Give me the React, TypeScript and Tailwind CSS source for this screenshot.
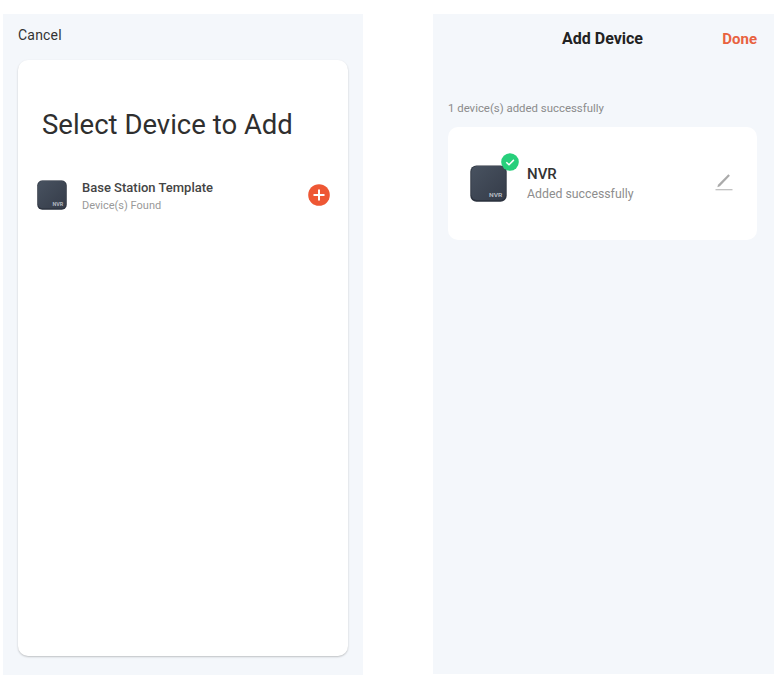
const DeviceIcon = ({ label, className }: { label: string; className: string }) => (
	<svg viewBox="0 0 36 36" className={className} aria-hidden="true">
		<defs>
			<linearGradient id="device" x1="0" y1="0" x2="1" y2="1">
				<stop offset="0" stopColor="#485260" />
				<stop offset="1" stopColor="#353c49" />
			</linearGradient>
		</defs>
		<rect x="0.3" y="0.5" width="35.4" height="35.3" rx="6" fill="#2c333f" />
		<rect x="1.2" y="1" width="33.6" height="33" rx="5.5" fill="url(#device)" />
		<text x="18.5" y="31" fontSize="5.6" fontWeight="700" fill="#b3b8c1" textLength="13" lengthAdjust="spacingAndGlyphs">
			{label}
		</text>
	</svg>
);

const AddIcon = () => (
	<svg viewBox="0 0 22 22" className="size-[22px]" aria-hidden="true">
		<circle cx="11" cy="11" r="10.8" fill="#ee5734" />
		<path d="M11 5.5v11M5.5 11h11" stroke="#fff" strokeWidth="2" fill="none" />
	</svg>
);

const CheckBadge = () => (
	<svg viewBox="0 0 18 18" className="absolute -right-3 -top-[12px] size-[18px]" aria-hidden="true">
		<circle cx="9" cy="9" r="8.8" fill="#27cf7b" />
		<path d="M5.3 9.2l2.7 2.6 4.9-4.9" stroke="#fff" strokeWidth="1.5" fill="none" />
	</svg>
);

const EditIcon = () => (
	<svg viewBox="0 0 18 18" className="h-[18px] w-[18px]" aria-hidden="true">
		<path d="M2.4 14.2l.6-2.5L13.4 1.2l1.5 1.5L4.9 13.3z" fill="#aaa" />
		<path d="M0.5 16.7h17" stroke="#bcbcbc" strokeWidth="1.2" />
	</svg>
);

const SelectDeviceScreen = () => (
	<section className="flex h-[661px] w-[360px] flex-col bg-[#f4f7fb] px-[15px] pt-[11px]">
		<button className="h-5 self-start text-[14px] leading-5 tracking-[0.2px] text-[#333]">Cancel</button>
		<div className="mt-[15px] h-[596px] w-[330px] rounded-[10px] bg-white px-6 pt-[49px] shadow-[0_1px_2px_rgba(0,0,0,0.22)]">
			<h1 className="h-8 whitespace-nowrap text-[27.5px] leading-8 text-[#2f2f2f]">Select Device to Add</h1>
			<div className="-ml-[5px] mt-8 flex h-[44px] items-center">
				<DeviceIcon label="NVR" className="size-[30px]" />
				<div className="ml-[15px] mt-[3px] flex-1 whitespace-nowrap">
					<p className="text-[13px] font-medium leading-[18px] text-[#444]">Base Station Template</p>
					<p className="text-[11px] leading-[17px] text-[#999]">Device(s) Found</p>
				</div>
				<button className="-mr-[6px]" aria-label="Add device">
					<AddIcon />
				</button>
			</div>
		</div>
	</section>
);

const AddDeviceScreen = () => (
	<section className="flex h-[660px] w-[341px] flex-col bg-[#f4f7fb] pl-[15px] pr-[17px] pt-[15px]">
		<header className="grid h-5 grid-cols-[1fr_auto_1fr] items-center">
			<h2 className="col-start-2 text-[16px] font-bold leading-5 text-[#222]">Add Device</h2>
			<button className="justify-self-end text-[15px] font-bold leading-5 text-[#e8623f]">Done</button>
		</header>
		<p className="mt-[51px] h-4 text-[11.4px] leading-4 text-[#8b8b8b]">1 device(s) added successfully</p>
		<div className="mt-[11px] flex h-[113px] items-center rounded-[10px] bg-white pl-[22px] pr-6">
			<div className="relative size-[37px]">
				<DeviceIcon label="NVR" className="size-[37px]" />
				<CheckBadge />
			</div>
			<div className="ml-5 flex-1 whitespace-nowrap">
				<p className="text-[15px] font-medium leading-5 text-[#333]">NVR</p>
				<p className="text-[12.3px] leading-5 text-[#8d8d8d]">Added successfully</p>
			</div>
			<button className="-mt-[3px]" aria-label="Edit name">
				<EditIcon />
			</button>
		</div>
	</section>
);

const App = () => {
	return (
		<main className="flex h-[678px] w-[776px] gap-[70px] overflow-hidden bg-white pl-[3px] pt-[14px] font-['Roboto',sans-serif]">
			<SelectDeviceScreen />
			<AddDeviceScreen />
		</main>
	);
};

export default App;
